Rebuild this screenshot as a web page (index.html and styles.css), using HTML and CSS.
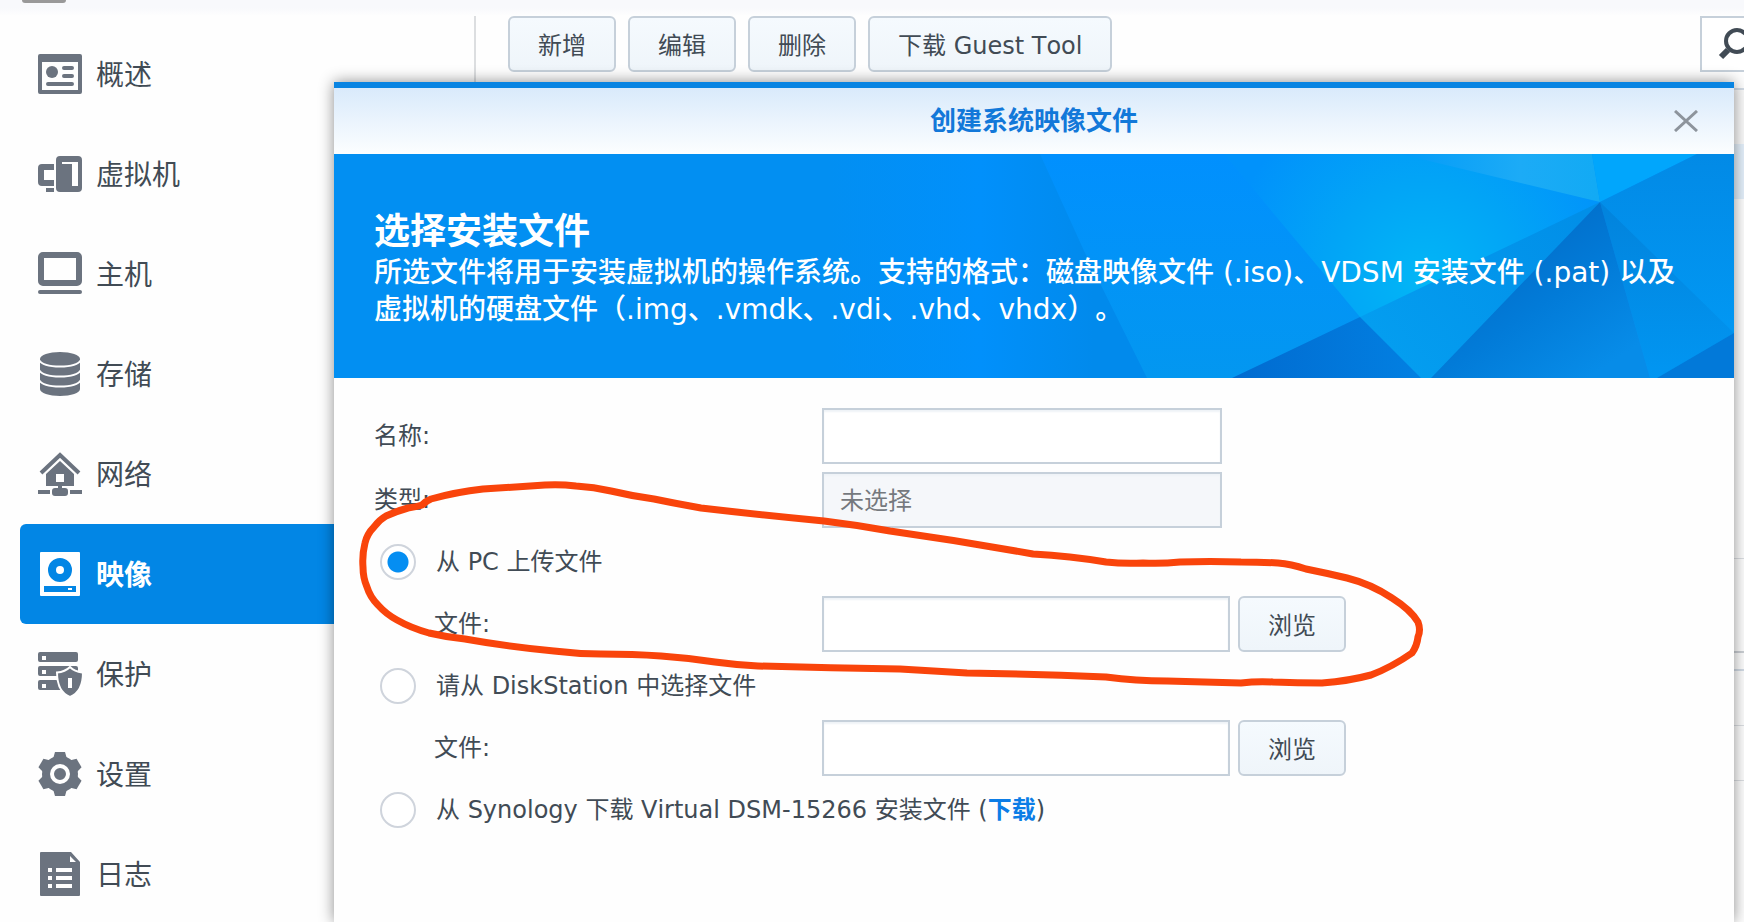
FILE: index.html
```html
<!DOCTYPE html>
<html lang="zh-CN">
<head>
<meta charset="utf-8">
<title>创建系统映像文件</title>
<link rel="stylesheet" href="styles.css">
</head>
<body>
<div class="app">
  <header class="topbar"><span class="topbar-tab"></span></header>
  <nav class="sidebar">
    <a class="nav-item" href="#overview">
      <svg class="nav-icon" viewBox="0 0 44 44"><path fill="currentColor" fill-rule="evenodd" d="M2 2H42a2 2 0 0 1 2 2V40a2 2 0 0 1-2 2H2a2 2 0 0 1-2-2V4a2 2 0 0 1 2-2ZM4 10V38H40V10Z"/><circle cx="14" cy="20" r="6" fill="currentColor"/><path d="M26 16h8M26 24h8M10 32h24" stroke="currentColor" stroke-width="4" stroke-linecap="round"/></svg>
      <span class="nav-text">概述</span></a>
    <a class="nav-item" href="#vm">
      <svg class="nav-icon" viewBox="0 0 44 44"><path fill="currentColor" d="M16 12H4a4 4 0 0 0-4 4V30a4 4 0 0 0 4 4H16V28H6V18H16ZM8 36h8v4H8Z"/><path fill="currentColor" fill-rule="evenodd" d="M22 4H40a4 4 0 0 1 4 4V36a4 4 0 0 1-4 4H22a4 4 0 0 1-4-4V8a4 4 0 0 1 4-4ZM24 10V12H34V34H40V10Z"/></svg>
      <span class="nav-text">虚拟机</span></a>
    <a class="nav-item" href="#host">
      <svg class="nav-icon" viewBox="0 0 44 44"><path fill="currentColor" fill-rule="evenodd" d="M5 0H39a5 5 0 0 1 5 5V29a5 5 0 0 1-5 5H5a5 5 0 0 1-5-5V5a5 5 0 0 1 5-5ZM6 6V28H38V6Z"/><path d="M2 40H42" stroke="currentColor" stroke-width="4" stroke-linecap="round"/></svg>
      <span class="nav-text">主机</span></a>
    <a class="nav-item" href="#storage">
      <svg class="nav-icon" viewBox="0 0 44 44"><path fill="currentColor" d="M2 7C2 3 11 0 22 0S42 3 42 7V37C42 41 33 44 22 44S2 41 2 37Z"/><path d="M1 8C4 13 12 14.500 22 14.500S40 13 43 8M1 18C4 23 12 24.500 22 24.500S40 23 43 18M1 28C4 33 12 34.500 22 34.500S40 33 43 28" fill="none" stroke="#fff" stroke-width="2"/></svg>
      <span class="nav-text">存储</span></a>
    <a class="nav-item" href="#network">
      <svg class="nav-icon" viewBox="0 0 44 44"><path d="M3 21 22 3 41 21" fill="none" stroke="currentColor" stroke-width="4"/><path fill="currentColor" fill-rule="evenodd" d="M22 9 36 22V34H24v2h3a3 3 0 0 1 3 3v2a3 3 0 0 1-3 3H17a3 3 0 0 1-3-3V39a3 3 0 0 1 3-3h3V34H8V22ZM18 22v8h8V22ZM0 38H12v4H0ZM32 38H44v4H32Z"/></svg>
      <span class="nav-text">网络</span></a>
    <a class="nav-item nav-item-active" href="#image">
      <svg class="nav-icon" viewBox="0 0 44 44"><path fill="currentColor" fill-rule="evenodd" d="M3 0H41a1 1 0 0 1 1 1V43a1 1 0 0 1-1 1H3a1 1 0 0 1-1-1V1a1 1 0 0 1 1-1ZM22 6a12 12 0 1 0 0 24a12 12 0 1 0 0-24ZM6 34v6H38V34Z"/><circle cx="22" cy="18" r="4" fill="currentColor"/><path fill="currentColor" d="M30 36h4v2h-4Z"/></svg>
      <span class="nav-text">映像</span></a>
    <a class="nav-item" href="#protect">
      <svg class="nav-icon" viewBox="0 0 44 44"><path fill="currentColor" fill-rule="evenodd" d="M2 0H38a2 2 0 0 1 2 2V8a2 2 0 0 1-2 2H2a2 2 0 0 1-2-2V2a2 2 0 0 1 2-2ZM4 4v4H8V4ZM2 14H38a2 2 0 0 1 2 2V22a2 2 0 0 1-2 2H2a2 2 0 0 1-2-2V16a2 2 0 0 1 2-2ZM4 18v4H8V18ZM2 28H38V38H2a2 2 0 0 1-2-2V30a2 2 0 0 1 2-2ZM4 32v4H8V32Z"/><path fill="currentColor" stroke="#fff" stroke-width="2" d="M32 15C35 18 39 20 45 20.500C45 32 42 41 32 45C22 41 19 32 19 20.500C25 20 29 18 32 15Z"/><path fill="#fff" d="M30 26h4V36h-4Z"/></svg>
      <span class="nav-text">保护</span></a>
    <a class="nav-item" href="#settings">
      <svg class="nav-icon" viewBox="0 0 44 44"><g fill="currentColor"><circle cx="22" cy="22" r="18"/><path id="tooth" d="M17 0H27L29 7V37L27 44H17L15 37V7Z"/><use href="#tooth" transform="rotate(60 22 22)"/><use href="#tooth" transform="rotate(120 22 22)"/></g><circle cx="22" cy="22" r="8" fill="none" stroke="#fff" stroke-width="4"/></svg>
      <span class="nav-text">设置</span></a>
    <a class="nav-item" href="#log">
      <svg class="nav-icon" viewBox="0 0 44 44"><path fill="currentColor" fill-rule="evenodd" d="M3 0H33L42 10V43a1 1 0 0 1-1 1H3a1 1 0 0 1-1-1V1a1 1 0 0 1 1-1ZM32 4V10H38ZM10 16v4h4V16ZM18 16v4H34V16ZM10 24v4h4V24ZM18 24v4H34V24ZM10 32v4h4V32ZM18 32v4H34V32Z"/></svg>
      <span class="nav-text">日志</span></a>
  </nav>
  <main class="content">
    <div class="toolbar">
      <button class="btn" type="button">新增</button>
      <button class="btn" type="button">编辑</button>
      <button class="btn" type="button">删除</button>
      <button class="btn" type="button">下载 Guest Tool</button>
      <button class="search" type="button" aria-label="搜索"><svg class="search-icon" viewBox="0 0 32 34"><circle cx="19" cy="14" r="11" fill="none" stroke="currentColor" stroke-width="4"/><path d="M10 23 3 30" stroke="currentColor" stroke-width="6"/></svg></button>
    </div>
    <div class="list">
      <div class="list-head"></div>
      <div class="list-row list-row-selected"></div>
      <div class="list-body"></div>
      <div class="list-panel"></div>
      <div class="list-gap"></div>
      <div class="list-row"></div>
      <div class="list-row"></div>
      <div class="list-rest"></div>
    </div>
  </main>
</div>

<section class="dialog" role="dialog" aria-labelledby="dialog-title">
  <header class="dialog-head">
    <h1 class="dialog-title" id="dialog-title">创建系统映像文件</h1>
    <button class="dialog-close" type="button" aria-label="关闭"><svg class="close-icon" viewBox="0 0 24 22"><path d="M1 1 23 21M23 1 1 21" stroke="currentColor" stroke-width="3"/></svg></button>
  </header>
  <div class="banner">
    <svg class="banner-art" viewBox="0 0 1400 224" preserveAspectRatio="xMaxYMid slice">
      <defs>
        <linearGradient id="g-base" gradientUnits="userSpaceOnUse" x1="0" y1="0" x2="760" y2="0"><stop offset="0.65" stop-color="#028ff2"/><stop offset="0.850" stop-color="#0190fb"/><stop offset="1" stop-color="#018aec"/></linearGradient>
        <linearGradient id="g-mid" x1="0" y1="0" x2="0" y2="1"><stop offset="0" stop-color="#0190fe"/><stop offset="1" stop-color="#0397f0"/></linearGradient>
        <radialGradient id="g-glow" gradientUnits="userSpaceOnUse" cx="1090" cy="125" r="200"><stop offset="0" stop-color="#02b6f6"/><stop offset="0.5" stop-color="#02a4f6"/><stop offset="1" stop-color="#0192fb"/></radialGradient>
        <linearGradient id="g-pale" x1="0" x2="1"><stop offset="0" stop-color="#039bf8"/><stop offset="0.6" stop-color="#1cabf6"/><stop offset="1" stop-color="#12aaf4"/></linearGradient>
        <linearGradient id="g-right" x1="0" y1="0" x2="0" y2="1"><stop offset="0" stop-color="#028ae6"/><stop offset="1" stop-color="#019bf6"/></linearGradient>
        <linearGradient id="g-side" x1="0" y1="0" x2="0" y2="1"><stop offset="0" stop-color="#0283dc"/><stop offset="1" stop-color="#0196f2"/></linearGradient>
        <linearGradient id="g-fold" gradientUnits="userSpaceOnUse" x1="1240" y1="60" x2="1060" y2="220"><stop offset="0" stop-color="#018fe8"/><stop offset="1" stop-color="#049ef0"/></linearGradient>
        <linearGradient id="g-dark" gradientUnits="userSpaceOnUse" x1="1180" y1="100" x2="1260" y2="220"><stop offset="0" stop-color="#0271cd"/><stop offset="0.4" stop-color="#027bd8"/><stop offset="1" stop-color="#078ce8"/></linearGradient>
        <linearGradient id="g-low" x1="0" x2="1"><stop offset="0" stop-color="#016bd0"/><stop offset="1" stop-color="#0280e2"/></linearGradient>
      </defs>
      <path fill="url(#g-base)" d="M0 0H1400V224H0Z"/>
      <path fill="url(#g-mid)" d="M706 0H1400V224H813L751 99Z"/>
      <path fill="url(#g-glow)" d="M890 0H1400V224H1087L1026 163Z"/>
      <path fill="url(#g-pale)" d="M1066 0H1258L1266 48Z"/>
      <path fill="#01a6fc" d="M1258 0H1363L1266 48Z"/>
      <path fill="url(#g-right)" d="M1363 0H1400V224H1316L1266 48Z"/>
      <path fill="url(#g-side)" d="M1266 48 1400 179 1323 224H1316Z"/>
      <path fill="url(#g-fold)" d="M1266 48 1026 163 1087 224H1097Z"/>
      <path fill="url(#g-low)" d="M1026 163 1087 224H898Z"/>
      <path fill="url(#g-dark)" d="M1266 48 1316 224H1097Z"/>
      <path fill="#0279d9" d="M1400 179V224H1323Z"/>
    </svg>
    <div class="banner-text">
      <h2 class="banner-title">选择安装文件</h2>
      <p class="banner-desc">所选文件将用于安装虚拟机的操作系统。支持的格式：磁盘映像文件 (.iso)、VDSM 安装文件 (.pat) 以及虚拟机的硬盘文件（.img、.vmdk、.vdi、.vhd、vhdx）。</p>
    </div>
  </div>
  <form class="form">
    <div class="field"><label class="field-label" for="name">名称:</label><input class="text-input" id="name" type="text"></div>
    <div class="field"><label class="field-label" for="type">类型:</label><input class="text-input" id="type" type="text" value="未选择" disabled></div>
    <div class="choice"><input class="radio" type="radio" name="source" id="src-pc" checked><label for="src-pc">从 PC 上传文件</label></div>
    <div class="field"><label class="field-label field-label-nested" for="file-pc">文件:</label><input class="text-input text-input-file" id="file-pc" type="text"><button class="btn" type="button">浏览</button></div>
    <div class="choice"><input class="radio" type="radio" name="source" id="src-ds"><label for="src-ds">请从 DiskStation 中选择文件</label></div>
    <div class="field"><label class="field-label field-label-nested" for="file-ds">文件:</label><input class="text-input text-input-file" id="file-ds" type="text"><button class="btn" type="button">浏览</button></div>
    <div class="choice"><input class="radio" type="radio" name="source" id="src-syno"><label for="src-syno">从 Synology 下载 Virtual DSM-15266 安装文件 (<a class="link" href="#download">下载</a>)</label></div>
  </form>
  <svg class="marker" viewBox="0 0 1066 210"><path transform="translate(-358 -480)" fill="none" stroke="#f9440b" stroke-width="7" stroke-linecap="round" stroke-linejoin="round" d="M431 499Q426 501 422 505Q416 507 408 508Q397 511 386 516Q379 520 374 527Q367 534 365 543Q362 555 363 567Q363 578 367 587Q370 597 378 605Q386 614 397 620Q411 628 429 633Q446 637 465 639Q510 647 554 651Q578 654 601 654Q633 654 661 656Q689 658 715 662Q737 665 758 666Q829 668 900 669Q934 671 967 673Q1037 674 1106 677Q1136 681 1167 681Q1204 682 1241 683Q1257 681 1273 682Q1298 683 1322 683Q1349 681 1371 675Q1392 667 1412 653Q1417 646 1418 637Q1421 630 1418 622Q1411 610 1392 598Q1371 584 1347 578Q1326 573 1306 569Q1291 564 1278 563Q1260 562 1241 562Q1210 561 1180 562Q1161 564 1143 563Q1124 564 1106 562Q1070 556 1033 554Q961 541 890 531Q857 525 824 521Q761 515 701 508Q678 504 654 499Q632 496 611 491Q594 487 576 486Q560 484 545 485Q514 487 483 489Q456 492 431 499Z"/></svg>
</section>
</body>
</html>
```
FILE: styles.css
```css
* { box-sizing: border-box; }

body {
  margin: 0;
  height: 100vh;
  position: relative;
  overflow: hidden;
  background: #fefefe;
  color: #414b55;
  font: 24px/32px "DejaVu Sans", "Noto Sans CJK SC", sans-serif;
  font-kerning: none;
  text-spacing-trim: space-all;
}

button, input { font: inherit; font-kerning: none; color: inherit; }

.app {
  display: grid;
  grid-template: 16px 1fr / 476px 1fr;
  height: 100vh;
}

/* Top strip */
.topbar {
  grid-column: 1 / -1;
  padding-left: 22px;
  background: linear-gradient(#f8f9fc 50%, #fefefe);
}
.topbar-tab {
  display: block;
  width: 44px;
  height: 3px;
  border-radius: 0 0 4px 4px;
  background: #999;
}

/* Sidebar */
.sidebar {
  padding: 8px 0 0 20px;
  border-right: 2px solid #dcdee0;
}
.nav-item {
  display: flex;
  align-items: center;
  gap: 14px;
  height: 100px;
  padding-left: 18px;
  border-radius: 6px;
  color: #414b55;
  font-size: 28px;
  text-decoration: none;
}
.nav-icon { width: 44px; height: 44px; color: #6b737f; }
.nav-text { padding-top: 3px; }
.nav-item-active { background: #0286e5; color: #fff; font-weight: 700; }
.nav-item-active .nav-icon { color: #fff; }

/* Toolbar */
.content { display: flex; flex-direction: column; min-width: 0; }
.toolbar { display: flex; gap: 12px; padding: 0 0 16px 32px; }
.btn {
  height: 56px;
  padding: 3px 28px 0;
  border: 2px solid #c6d0da;
  border-radius: 6px;
  background: linear-gradient(#f5fafe, #eff5fa);
  white-space: nowrap;
}
.search {
  width: 44px;
  height: 56px;
  margin-left: auto;
  padding: 0 0 0 16px;
  border: 2px solid #c6d0da;
  border-right: 0;
  background: #fff;
  color: #414b55;
  overflow: hidden;
}
.search-icon { display: block; width: 32px; height: 34px; }

/* List behind the dialog */
.list { flex: 1; display: flex; flex-direction: column; border-top: 2px solid #d3dce6; }
.list-head { height: 54px; background: #fafafa; }
.list-row { height: 55px; border-bottom: 1px solid #dcdfe3; }
.list-row-selected { background: #e4f0fb; border: 0; }
.list-body { height: 360px; border-bottom: 1px solid #dcdfe3; }
.list-panel { height: 94px; border-bottom: 2px solid #ccd0d5; }
.list-gap { height: 18px; border-bottom: 2px solid #d3dce6; }
.list-rest { flex: 1; }

/* Dialog */
.dialog {
  position: absolute;
  inset: 82px 10px 0 334px;
  border-top: 6px solid #0884e2;
  background: #fefefe;
  box-shadow: 0 0 14px rgba(0, 0, 0, 0.45);
}
.dialog-head {
  display: flex;
  align-items: center;
  height: 66px;
  padding: 0 36px 0 60px;
  background: linear-gradient(#d9eafb, #fcfeff);
}
.dialog-title {
  flex: 1;
  margin: 0;
  color: #1278d9;
  font-size: 26px;
  text-align: center;
}
.dialog-close { padding: 0; border: 0; background: none; color: #8d949c; }
.close-icon { display: block; width: 24px; height: 22px; }

/* Banner */
.banner { position: relative; min-height: 224px; padding: 56px 40px 50px; color: #fff; }
.banner-art { position: absolute; inset: 0; width: 100%; height: 100%; }
.banner-text { position: relative; }
.banner-title { margin: 0; font-size: 36px; line-height: 44px; }
.banner-desc { margin: 0; font-size: 28px; font-weight: 500; line-height: 37px; }

/* Form */
.form { padding: 30px 40px; }
.field { display: flex; align-items: center; gap: 8px; }
.field + .field { margin-top: 8px; }
.field-label { width: 440px; }
.field-label-nested { padding-left: 60px; }
.text-input {
  width: 400px;
  height: 56px;
  padding: 0 16px 4px;
  border: 2px solid #c6d0da;
  background: #fff;
  box-shadow: inset 0 2px 2px #eff3f7;
}
.text-input:disabled { background: #f5f7fa; color: #75797e; }
.text-input-file { width: 408px; }
.choice { display: flex; align-items: center; gap: 20px; height: 36px; margin: 16px 0; padding-left: 6px; }
.radio {
  appearance: none;
  width: 36px;
  height: 36px;
  margin: 0;
  border: 2px solid #cfd4dc;
  border-radius: 50%;
  background: #fff;
}
.radio:checked { background: radial-gradient(circle, #058ef2 10px, #fff 11px); }
.link { color: #0c7de6; font-weight: 700; text-decoration: none; }

/* Hand-drawn highlight */
.marker {
  position: absolute;
  left: 24px;
  top: 392px;
  width: 1066px;
  height: 210px;
  overflow: visible;
  pointer-events: none;
}
```
